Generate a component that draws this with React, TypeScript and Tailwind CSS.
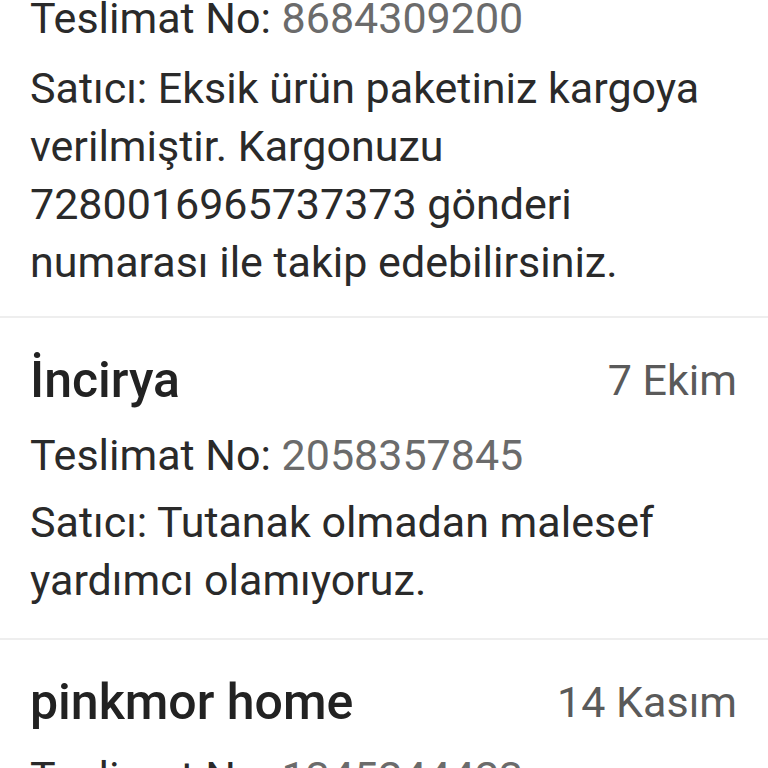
const messages = [
  {
    seller: "",
    date: "",
    deliveryNo: "8684309200",
    text: "Satıcı: Eksik ürün paketiniz kargoya verilmiştir. Kargonuzu 7280016965737373 gönderi numarası ile takip edebilirsiniz.",
  },
  {
    seller: "İncirya",
    date: "7 Ekim",
    deliveryNo: "2058357845",
    text: "Satıcı: Tutanak olmadan malesef yardımcı olamıyoruz.",
  },
  {
    seller: "pinkmor home",
    date: "14 Kasım",
    deliveryNo: "1345244423",
    text: "Satıcı: Teşekkür ederiz, iyi günler dileriz.",
  },
];

interface MessageItemProps {
  seller: string;
  date: string;
  deliveryNo: string;
  text: string;
  first?: boolean;
}

const MessageItem = ({ seller, date, deliveryNo, text, first }: MessageItemProps) => {
  return (
    <div
      className={
        first
          ? "-mt-[11px] border-b-2 border-[#eeeeee] pl-[30px] pr-[31px] pb-[25px]"
          : "border-b-2 border-[#eeeeee] pl-[30px] pr-[31px] pt-[32px] pb-[29px]"
      }
    >
      {!first && (
        <div className="flex items-center justify-between mb-[16px]">
          <p className="text-[50px] leading-[60px] font-medium text-[#222222]">{seller}</p>
          <p className="text-[43px] leading-[60px] text-[#5a5a5a]">{date}</p>
        </div>
      )}
      <p className="text-[43px] leading-[58px] text-[#2a2a2a]">
        Teslimat No: <span className="text-[#6b6b6b]">{deliveryNo}</span>
      </p>
      <p className={first ? "mt-[12px] text-[43px] leading-[58px] text-[#2a2a2a]" : "mt-[9px] text-[43px] leading-[58px] text-[#2a2a2a]"}>
        {text}
      </p>
    </div>
  );
};

export default function App() {
  return (
    <div className="h-[768px] overflow-hidden bg-white" style={{ fontFamily: "Roboto, 'Liberation Sans', sans-serif" }}>
      {messages.map((m, i) => (
        <MessageItem key={m.deliveryNo} {...m} first={i === 0} />
      ))}
    </div>
  );
}
